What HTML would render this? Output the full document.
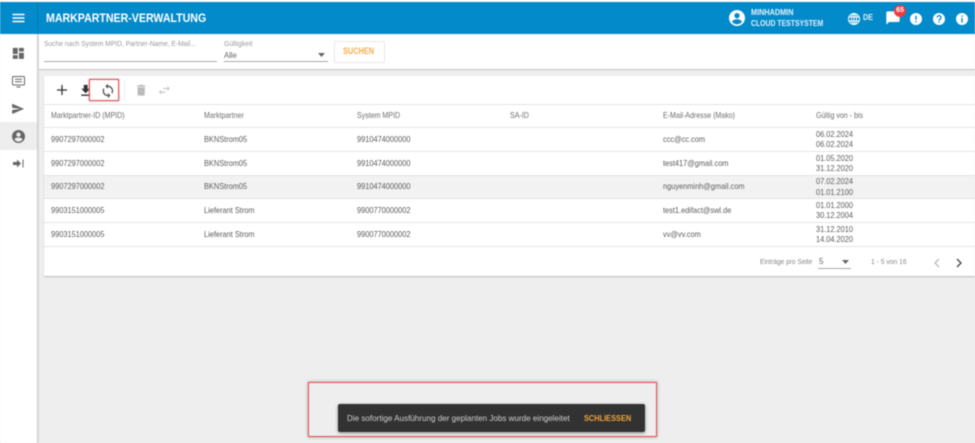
<!DOCTYPE html>
<html><head><meta charset="utf-8">
<style>
html,body{margin:0;padding:0;width:975px;height:443px;overflow:hidden;background:#eee;font-family:"Liberation Sans",sans-serif}
.a{position:absolute;white-space:nowrap}
#w{position:absolute;left:0;top:0;width:975px;height:443px;overflow:hidden;filter:blur(.45px)}
.t{font-size:8.5px;color:#5c5c5c;line-height:10px;transform-origin:0 50%;transform:scaleX(.87)}
.h{font-size:8.2px;color:#6e6e6e;line-height:10px;transform-origin:0 50%;transform:scaleX(.86)}
.l{position:absolute;left:44px;width:931px;height:1px;background:#e4e4e4}
svg{position:absolute}
</style></head><body><div id="w">
<div class="a" style="left:0;top:0;width:975px;height:2px;background:#fff"></div>
<div class="a" style="left:0;top:2px;width:975px;height:32px;background:#028aca"></div>
<div class="a" style="left:37px;top:2px;width:1px;height:32px;background:#0279b2"></div>
<div class="a" style="left:0;top:34px;width:37px;height:409px;background:#fff"></div>
<div class="a" style="left:37px;top:34px;width:2px;height:409px;background:linear-gradient(90deg,#c8c8c8,#e2e2e2)"></div>
<div class="a" style="left:0;top:122px;width:37px;height:28px;background:#eee"></div>
<div class="a" style="left:39px;top:34px;width:936px;height:35px;background:#fff"></div>
<div class="a" style="left:39px;top:69px;width:936px;height:1px;background:#c4c4c4"></div>

<svg style="left:12px;top:13px" width="13" height="10" viewBox="0 0 13 10"><path d="M.5 1.500h12M.5 5h12M.5 8.500h12" stroke="#fff" stroke-width="1.500"/></svg>
<div class="a" style="left:46px;top:10px;font-size:12.2px;font-weight:bold;color:#fff;line-height:16px;transform-origin:0 50%;transform:scaleX(.87)">MARKPARTNER-VERWALTUNG</div>

<svg style="left:729px;top:10px" width="16" height="16" viewBox="0 0 24 24"><path fill="#fff" d="M12 0a12 12 0 1 0 0 24a12 12 0 0 0 0-24zm0 4.500a4 4 0 1 1 0 8a4 4 0 0 1 0-8zm0 17c-3 0-5.800-1.500-7.300-3.900c.1-2.400 4.900-3.700 7.300-3.700s7.200 1.300 7.300 3.700c-1.500 2.400-4.300 3.900-7.300 3.900z"/></svg>
<div class="a" style="left:751px;top:8px;font-size:8px;font-weight:bold;color:#e4f2fa;line-height:10px;transform-origin:0 50%;transform:scaleX(.91)">MINHADMIN</div>
<div class="a" style="left:751px;top:19px;font-size:8px;font-weight:bold;color:#e4f2fa;line-height:10px;transform-origin:0 50%;transform:scaleX(.86)">CLOUD TESTSYSTEM</div>
<svg style="left:848px;top:13px" width="12" height="12" viewBox="0 0 24 24" fill="none" stroke="#fff" stroke-width="2"><circle cx="12" cy="12" r="11"/><ellipse cx="12" cy="12" rx="5" ry="11"/><path d="M1 8h22M1 16h22M12 1v22"/></svg>
<div class="a" style="left:863px;top:13px;font-size:8px;font-weight:bold;color:#e4f2fa;line-height:10px;transform-origin:0 50%;transform:scaleX(.9)">DE</div>
<svg style="left:885px;top:10px" width="16" height="16" viewBox="0 0 24 24"><path fill="#fff" d="M20 2H4c-1.100 0-1.990.9-1.990 2L2 22l4-4h14c1.100 0 2-.9 2-2V4c0-1.100-.9-2-2-2z"/></svg>
<div class="a" style="left:894px;top:5px;width:12px;height:12px;border-radius:50%;background:#ef3c3f;color:#fff;font-size:7px;font-weight:bold;line-height:12px;text-align:center">65</div>
<svg style="left:910px;top:13px" width="12" height="12" viewBox="0 0 12 12"><circle cx="6" cy="6" r="6" fill="#fff"/><path d="M6 2.700v4M6 8v1.300" stroke="#028aca" stroke-width="1.400"/></svg>
<svg style="left:933px;top:13px" width="12" height="12" viewBox="0 0 12 12"><circle cx="6" cy="6" r="6" fill="#fff"/><path d="M4.200 4.600a1.900 1.900 0 1 1 2.800 1.600c-.7.400-1 .8-1 1.500M6 8.500v1.200" fill="none" stroke="#028aca" stroke-width="1.200"/></svg>
<svg style="left:956px;top:13px" width="12" height="12" viewBox="0 0 12 12"><circle cx="6" cy="6" r="6" fill="#fff"/><path d="M6 2.500v1.300M6 5v4.500" stroke="#028aca" stroke-width="1.400"/></svg>

<svg style="left:11.200px;top:46.200px" width="14.700" height="14.700" viewBox="0 0 24 24" fill="#666"><path d="M3 13h8V3H3v10zm0 8h8v-6H3v6zm10 0h8V11h-8v10zm0-18v6h8V3h-8z"/></svg>
<svg style="left:12px;top:76px" width="13" height="12" viewBox="0 0 13 12" fill="none" stroke="#666"><rect x=".5" y=".5" width="12" height="8.500" rx="1"/><path d="M3 3.200h7M3 5.800h7M4.500 11h4"/></svg>
<svg style="left:11px;top:101.700px" width="13.700" height="13.700" viewBox="0 0 24 24"><path fill="#666" d="M2.010 21L23 12 2.010 3 2 10l15 2-15 2z"/></svg>
<svg style="left:12px;top:130px" width="13" height="13" viewBox="0 0 24 24"><path fill="#666" d="M12 0a12 12 0 1 0 0 24a12 12 0 0 0 0-24zm0 4.500a4 4 0 1 1 0 8a4 4 0 0 1 0-8zm0 17c-3 0-5.800-1.500-7.300-3.900c.1-2.400 4.900-3.700 7.300-3.700s7.200 1.300 7.300 3.700c-1.500 2.400-4.300 3.900-7.300 3.900z"/></svg>
<svg style="left:13px;top:159px" width="11" height="9" viewBox="0 0 11 9"><path fill="#666" d="M0 3h4V.500L8 4.500 4 8.500V6H0z"/><path d="M10 .5v8" stroke="#666" stroke-width="1"/></svg>

<div class="a" style="left:44px;top:39px;font-size:7.600px;color:#999;line-height:10px;transform-origin:0 50%;transform:scaleX(.88)">Suche nach System MPID, Partner-Name, E-Mail...</div>
<div class="a" style="left:44px;top:61px;width:173px;height:1px;background:#aaa"></div>
<div class="a" style="left:224px;top:39px;font-size:7.600px;color:#999;line-height:10px;transform-origin:0 50%;transform:scaleX(.9)">Gültigkeit</div>
<div class="a" style="left:224px;top:50px;font-size:8.500px;color:#666;line-height:10px;transform-origin:0 50%;transform:scaleX(.9)">Alle</div>
<div class="a" style="left:224px;top:61px;width:104px;height:1px;background:#aaa"></div>
<svg style="left:318px;top:53px" width="7" height="4"><path d="M0 0h7L3.500 4z" fill="#666"/></svg>
<div class="a" style="left:334px;top:41px;width:49px;height:20px;border:1px solid #e8e8e8;border-radius:2px;background:#fff"></div>
<div class="a" style="left:343px;top:46px;font-size:9.200px;font-weight:bold;color:#f7ac4d;line-height:10px;transform-origin:0 50%;transform:scaleX(.8)">SUCHEN</div>

<div class="a" style="left:44px;top:76px;width:931px;height:200px;background:#fff;box-shadow:0 1px 1px #bbb"></div>
<div class="l" style="top:104px"></div>
<div class="a" style="left:124px;top:80px;width:1px;height:21px;background:#eee"></div>
<svg style="left:57px;top:85px" width="10" height="10"><path d="M5 0v10M0 5h10" stroke="#333" stroke-width="1.300"/></svg>
<svg style="left:77.800px;top:83.100px" width="15.400" height="15.400" viewBox="0 0 24 24"><path fill="#333" d="M19 9h-4V3H9v6H5l7 7 7-7zM5 18v2h14v-2H5z"/></svg>
<svg style="left:100px;top:82.600px" width="15.800" height="15.800" viewBox="0 0 24 24"><path fill="#555" d="M12 4V1L8 5l4 4V6c3.310 0 6 2.690 6 6 0 1.010-.25 1.970-.7 2.800l1.460 1.460C19.540 15.030 20 13.570 20 12c0-4.420-3.580-8-8-8zm0 14c-3.310 0-6-2.690-6-6 0-1.010.25-1.970.7-2.800L5.240 7.740C4.460 8.970 4 10.430 4 12c0 4.420 3.580 8 8 8v3l4-4-4-4v3z"/></svg>
<div class="a" style="left:89px;top:79px;width:28px;height:20px;border:1.500px solid #f04a4e;box-shadow:0 0 2px #999"></div>
<svg style="left:133.800px;top:82.800px" width="14.400" height="14.400" viewBox="0 0 24 24"><path fill="#bbb" d="M6 19c0 1.100.9 2 2 2h8c1.100 0 2-.9 2-2V7H6v12zM19 4h-3.500l-1-1h-5l-1 1H5v2h14V4z"/></svg>
<svg style="left:157px;top:83px" width="14.700" height="14.700" viewBox="0 0 24 24"><path fill="#c8c8c8" d="M6.990 11L3 15l3.990 4v-3H14v-2H6.990v-3zM21 9l-3.990-4v3H10v2h7.010v3L21 9z"/></svg>

<div class="a h" style="left:51px;top:111px">Marktpartner-ID (MPID)</div>
<div class="a h" style="left:204px;top:111px">Marktpartner</div>
<div class="a h" style="left:357px;top:111px">System MPID</div>
<div class="a h" style="left:510px;top:111px">SA-ID</div>
<div class="a h" style="left:663px;top:111px">E-Mail-Adresse (Mako)</div>
<div class="a h" style="left:816px;top:111px">Gültig von - bis</div>
<div class="l" style="top:127px"></div>
<div class="l" style="top:151px"></div>
<div class="a" style="left:44px;top:175px;width:931px;height:23px;background:#f2f2f2"></div>
<div class="l" style="top:175px"></div>
<div class="l" style="top:198px"></div>
<div class="l" style="top:222px"></div>
<div class="l" style="top:246px"></div>

<div class="a t" style="left:51px;top:134px">9907297000002</div><div class="a t" style="left:204px;top:134px">BKNStrom05</div><div class="a t" style="left:357px;top:134px">9910474000000</div><div class="a t" style="left:663px;top:134px">ccc@cc.com</div><div class="a t" style="left:816px;top:129px">06.02.2024</div><div class="a t" style="left:816px;top:139px">06.02.2024</div>
<div class="a t" style="left:51px;top:158px">9907297000002</div><div class="a t" style="left:204px;top:158px">BKNStrom05</div><div class="a t" style="left:357px;top:158px">9910474000000</div><div class="a t" style="left:663px;top:158px">test417@gmail.com</div><div class="a t" style="left:816px;top:153px">01.05.2020</div><div class="a t" style="left:816px;top:163px">31.12.2020</div>
<div class="a t" style="left:51px;top:181px">9907297000002</div><div class="a t" style="left:204px;top:181px">BKNStrom05</div><div class="a t" style="left:357px;top:181px">9910474000000</div><div class="a t" style="left:663px;top:181px">nguyenminh@gmail.com</div><div class="a t" style="left:816px;top:176px">07.02.2024</div><div class="a t" style="left:816px;top:187px">01.01.2100</div>
<div class="a t" style="left:51px;top:205px">9903151000005</div><div class="a t" style="left:204px;top:205px">Lieferant Strom</div><div class="a t" style="left:357px;top:205px">9900770000002</div><div class="a t" style="left:663px;top:205px">test1.edifact@swl.de</div><div class="a t" style="left:816px;top:200px">01.01.2000</div><div class="a t" style="left:816px;top:210px">30.12.2004</div>
<div class="a t" style="left:51px;top:229px">9903151000005</div><div class="a t" style="left:204px;top:229px">Lieferant Strom</div><div class="a t" style="left:357px;top:229px">9900770000002</div><div class="a t" style="left:663px;top:229px">vv@vv.com</div><div class="a t" style="left:816px;top:224px">31.12.2010</div><div class="a t" style="left:816px;top:234px">14.04.2020</div>

<div class="a" style="left:760px;top:257px;font-size:7.500px;color:#888;line-height:10px;transform-origin:0 50%;transform:scaleX(.87)">Einträge pro Seite</div>
<div class="a" style="left:819px;top:257px;font-size:8px;color:#666;line-height:10px">5</div>
<div class="a" style="left:818px;top:268px;width:33px;height:1px;background:#aaa"></div>
<svg style="left:842px;top:260px" width="7" height="4"><path d="M0 0h7L3.500 4z" fill="#666"/></svg>
<div class="a" style="left:871px;top:257px;font-size:7.500px;color:#888;line-height:10px;transform-origin:0 50%;transform:scaleX(.9)">1 - 5 von 16</div>
<svg style="left:933px;top:258px" width="7" height="10" viewBox="0 0 7 10"><path d="M6 1L2 5l4 4" fill="none" stroke="#bbb" stroke-width="1.300"/></svg>
<svg style="left:956px;top:258px" width="7" height="10" viewBox="0 0 7 10"><path d="M1 1l4 4-4 4" fill="none" stroke="#444" stroke-width="1.300"/></svg>

<div class="a" style="left:308px;top:382px;width:346.500px;height:52.500px;border:1.500px solid #f04a4e;box-shadow:0 0 3px #999"></div>
<div class="a" style="left:338px;top:404px;width:307px;height:28px;background:#323232;border-radius:2px;box-shadow:0 1px 3px #888"></div>
<div class="a" style="left:347px;top:413px;font-size:8.600px;color:#cfcfcf;line-height:10px;transform-origin:0 50%;transform:scaleX(.94)">Die sofortige Ausführung der geplanten Jobs wurde eingeleitet</div>
<div class="a" style="left:584px;top:413px;font-size:8.500px;font-weight:bold;color:#f0a63a;line-height:10px;transform-origin:0 50%;transform:scaleX(.87)">SCHLIESSEN</div>
</div></body></html>
